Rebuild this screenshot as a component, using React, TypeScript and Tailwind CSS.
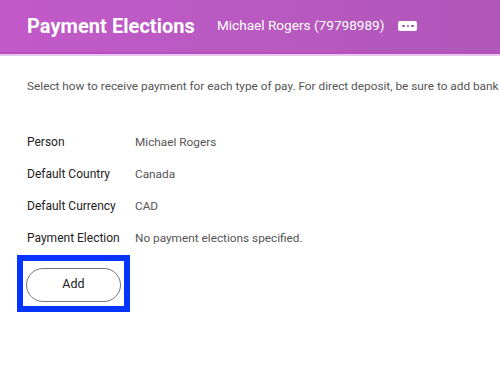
const rows = [
  { label: "Person", value: "Michael Rogers" },
  { label: "Default Country", value: "Canada" },
  { label: "Default Currency", value: "CAD" },
  { label: "Payment Election", value: "No payment elections specified." },
];

const App = () => {
  return (
    <div className="w-[500px] h-[369px] overflow-hidden bg-white font-['Roboto',sans-serif]">
      {/* header */}
      <div className="h-[54px] flex items-center pl-[27px] bg-gradient-to-r from-[#c25ac9] to-[#b057b9] border-b-2 border-[#b450c0]">
        <h1 className="text-[20px] font-bold text-white leading-none tracking-[0.05px]">Payment Elections</h1>
        <span className="ml-[22px] text-[13.6px] text-white leading-none">Michael Rogers (79798989)</span>
        <button className="ml-[14px] w-[19px] h-[10px] bg-white rounded-[2px] flex items-center justify-center gap-[2px]">
          <span className="w-[2.5px] h-[2.5px] rounded-full bg-[#9a50a8]" />
          <span className="w-[2.5px] h-[2.5px] rounded-full bg-[#9a50a8]" />
          <span className="w-[2.5px] h-[2.5px] rounded-full bg-[#9a50a8]" />
        </button>
      </div>
      <div className="h-[2px] bg-[#e9c6ec]" />

      <p className="mt-[22px] pl-[27px] text-[11.8px] text-[#555] whitespace-nowrap leading-[16px]">
        Select how to receive payment for each type of pay. For direct deposit, be sure to add bank
      </p>

      <div className="mt-[40px] pl-[27px] flex flex-col gap-[16px]">
        {rows.map((r) => (
          <div key={r.label} className="flex text-[12px] leading-[16px]">
            <span className="w-[108px] text-[#222] font-normal">{r.label}</span>
            <span className="text-[#555] text-[11.8px]">{r.value}</span>
          </div>
        ))}
      </div>

      <div className="mt-[9px] ml-[17px] w-[113px] h-[57px] border-[6px] border-[#0533ff] flex items-center">
        <button className="ml-[3px] mt-[2px] w-[95px] h-[34px] rounded-full border border-[#777] bg-white text-[12.5px] text-[#222]">
          Add
        </button>
      </div>
    </div>
  );
};

export default App;
